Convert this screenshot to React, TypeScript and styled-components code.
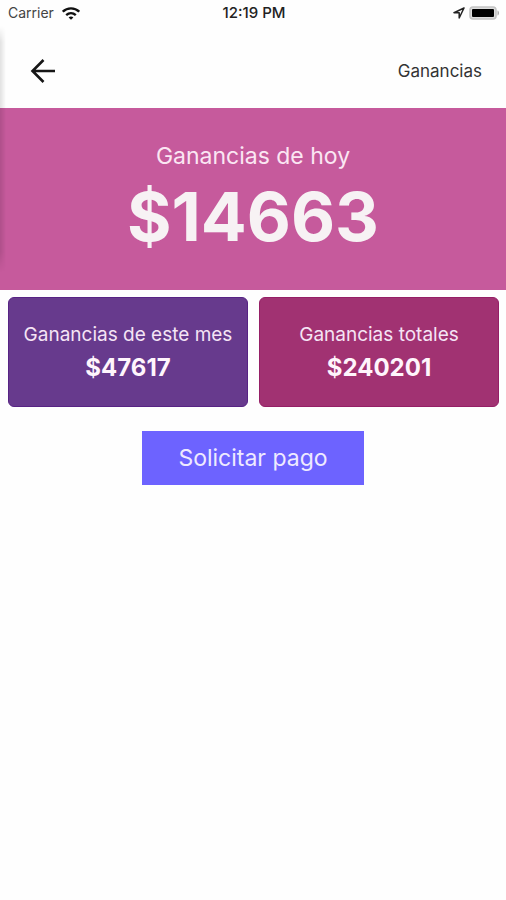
import React from "react";
import styled, { createGlobalStyle } from "styled-components";

const GlobalStyle = createGlobalStyle`
  *, *::before, *::after { box-sizing: border-box; }
  body { margin: 0; background: #fefefe; color: #222; font-family: Inter, "Liberation Sans", sans-serif; }
  p, h1, h2 { margin: 0; font-weight: 400; }
`;

const Screen = styled.div`
  position: relative;
  min-height: 100vh;
`;

const EdgeShadow = styled.div`
  position: absolute;
  top: 26px;
  left: 0;
  width: 6px;
  height: 246px;
  pointer-events: none;
  background: linear-gradient(to right, rgba(0, 0, 0, 0.11), rgba(0, 0, 0, 0.06) 50%, transparent);
  mask-image: linear-gradient(to bottom, transparent, #000 16px, #000 226px, transparent);
`;

const StatusBar = styled.div`
  display: grid;
  grid-template-columns: 1fr auto 1fr;
  align-items: center;
  height: 26px;
  padding: 0 6px 0 8px;
  font-size: 14px;
  line-height: 16px;
`;

const StatusGroup = styled.div<{ $end?: boolean }>`
  display: flex;
  align-items: center;
  gap: ${(p) => (p.$end ? "4px" : "8px")};
  justify-content: ${(p) => (p.$end ? "flex-end" : "flex-start")};
  color: #444;
`;

const Clock = styled.time`
  font-size: 15px;
  font-weight: 500;
`;

const Header = styled.header`
  display: flex;
  align-items: center;
  justify-content: space-between;
  height: 82px;
  padding: 8px 24px 0 28px;
`;

const BackButton = styled.button`
  display: flex;
  padding: 0;
  border: 0;
  background: none;
  color: #161616;
  cursor: pointer;
`;

const Title = styled.h1`
  font-size: 17px;
  line-height: 20px;
  color: #333;
`;

const Today = styled.section`
  display: flex;
  flex-direction: column;
  align-items: center;
  gap: 4px;
  padding: 32px 16px 34px;
  background: #c65a9c;
  text-align: center;
`;

const TodayLabel = styled.h2`
  font-size: 23px;
  line-height: 32px;
  color: #fbe6f3;
`;

const TodayAmount = styled.p`
  font-size: 68px;
  line-height: 80px;
  font-weight: 700;
  color: #f7f2f4;
`;

const Cards = styled.section`
  display: grid;
  grid-template-columns: 1fr 1fr;
  gap: 11px;
  padding: 7px 7px 0 8px;
`;

const Card = styled.article<{ $fill: string; $edge: string }>`
  display: flex;
  flex-direction: column;
  align-items: center;
  gap: 2px;
  padding: 23px 8px 21px;
  border: 1px solid ${(p) => p.$edge};
  border-radius: 6px;
  background: ${(p) => p.$fill};
  text-align: center;
`;

const CardLabel = styled.h2`
  font-size: 19px;
  line-height: 28px;
  color: #f5e4f5;
`;

const CardAmount = styled.p`
  font-size: 24px;
  line-height: 34px;
  font-weight: 700;
  color: #fff5fc;
`;

const Actions = styled.div`
  display: flex;
  justify-content: center;
  padding: 24px 16px;
`;

const PayButton = styled.button`
  padding: 11px 36px;
  border: 0;
  background: #6d63ff;
  color: #eeeaff;
  font-family: inherit;
  font-size: 23px;
  line-height: 32px;
  cursor: pointer;
`;

const WifiIcon = () => (
  <svg width="18" height="13" viewBox="0 0 18 13" fill="none" stroke="#111" strokeWidth="2.4" aria-hidden="true">
    <path d="M.8 4.7C5.3.3 12.7.3 17.2 4.7" />
    <path d="M4.2 8.1c2.8-2.5 6.8-2.5 9.6 0" />
    <path d="M9 12.8 6.6 10.4c1.3-1.3 3.5-1.3 4.8 0z" fill="#111" stroke="none" />
  </svg>
);

const LocationIcon = () => (
  <svg width="12" height="12" viewBox="0 0 12 12" fill="none" stroke="#222" strokeWidth="1.5" strokeLinejoin="round" aria-hidden="true">
    <path d="M11 1 1 5.7h5.2V11z" />
  </svg>
);

const BatteryIcon = () => (
  <svg width="31" height="14" viewBox="0 0 31 14" aria-hidden="true">
    <rect x="1" y="1" width="26" height="12" rx="3" fill="#ddd" stroke="#c4c4c4" strokeWidth="1.6" />
    <rect x="3" y="3" width="22" height="8" rx="1" fill="#000" />
    <path d="M28.5 4.5c2 .6 2 4.4 0 5z" fill="#aaa" />
  </svg>
);

const BackIcon = () => (
  <svg width="28" height="26" viewBox="0 0 28 26" fill="none" stroke="currentColor" strokeWidth="2.6" aria-hidden="true">
    <path d="M27 13H4.5M15.5 2 4.5 13l11 11" />
  </svg>
);

export default function App() {
  return (
    <Screen>
      <GlobalStyle />
      <StatusBar>
        <StatusGroup>
          <span>Carrier</span>
          <WifiIcon />
        </StatusGroup>
        <Clock>12:19 PM</Clock>
        <StatusGroup $end>
          <LocationIcon />
          <BatteryIcon />
        </StatusGroup>
      </StatusBar>
      <Header>
        <BackButton type="button" aria-label="Volver">
          <BackIcon />
        </BackButton>
        <Title>Ganancias</Title>
      </Header>
      <main>
        <Today>
          <TodayLabel>Ganancias de hoy</TodayLabel>
          <TodayAmount>$14663</TodayAmount>
        </Today>
        <Cards>
          <Card $fill="#673a8d" $edge="#572384">
            <CardLabel>Ganancias de este mes</CardLabel>
            <CardAmount>$47617</CardAmount>
          </Card>
          <Card $fill="#a13272" $edge="#951f66">
            <CardLabel>Ganancias totales</CardLabel>
            <CardAmount>$240201</CardAmount>
          </Card>
        </Cards>
        <Actions>
          <PayButton type="button">Solicitar pago</PayButton>
        </Actions>
      </main>
      <EdgeShadow />
    </Screen>
  );
}
